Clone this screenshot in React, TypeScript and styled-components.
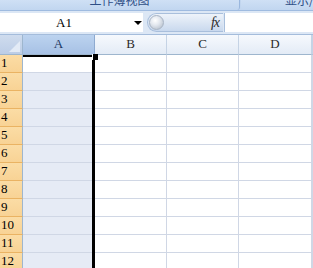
import React from 'react';
import styled, { createGlobalStyle } from 'styled-components';

const Global = createGlobalStyle`
  html, body { margin: 0; padding: 0; background: #fff; }
  body { width: 313px; height: 268px; overflow: hidden; font-family: "Liberation Serif", serif; }
`;

const Page = styled.div`
  width: 313px;
  height: 268px;
  overflow: hidden;
  display: flex;
  flex-direction: column;
  background: #fff;
`;

const Ribbon = styled.div`
  height: 10px;
  flex: none;
  display: flex;
  background: #c2d6ef;
  border-bottom: 1px solid #9fbbe0;
  overflow: hidden;
`;

const Group = styled.div<{ $w?: number; $pad?: number }>`
  width: ${(p) => (p.$w ? `${p.$w}px` : 'auto')};
  flex: ${(p) => (p.$w ? 'none' : '1')};
  display: flex;
  justify-content: ${(p) => (p.$pad ? 'flex-start' : 'center')};
  padding-left: ${(p) => p.$pad ?? 0}px;
  align-items: flex-end;
  background: linear-gradient(#cfe0f5, #c1d6f0);
  border-right: 1px solid #9ab7de;
  border-radius: 0 0 3px 3px;
  margin-right: 1px;
`;

const GroupLabel = styled.span`
  font: 12px/12px "Noto Sans CJK SC", sans-serif;
  color: #2f4f86;
  margin-bottom: 4px;
  white-space: nowrap;
`;

const FormulaBar = styled.div`
  height: 24px;
  flex: none;
  box-sizing: border-box;
  padding-top: 2px;
  display: flex;
  align-items: flex-start;
  background: #dce7f5;
  border-bottom: 1px solid #a4bcdb;
`;

const NameBox = styled.div`
  width: 143px;
  height: 19px;
  flex: none;
  box-sizing: border-box;
  background: #fff;
  display: flex;
  align-items: center;
  position: relative;
  font: 13px "Liberation Serif", serif;
  color: #000;
`;

const NameText = styled.span`
  width: 128px;
  text-align: center;
  padding-top: 1px;
`;

const Arrow = styled.span`
  width: 0;
  height: 0;
  border-left: 4px solid transparent;
  border-right: 4px solid transparent;
  border-top: 4px solid #000;
  margin-left: 6px;
`;

const Pill = styled.div`
  width: 76px;
  height: 19px;
  flex: none;
  margin-left: 4px;
  box-sizing: border-box;
  border: 1px solid #a9bfdc;
  border-right: none;
  border-radius: 10px 0 0 10px;
  background: linear-gradient(#eef3fa, #c9d9ee);
  display: flex;
  align-items: center;
  justify-content: space-between;
`;

const Knob = styled.span`
  width: 15px;
  height: 15px;
  margin-left: 1px;
  border-radius: 50%;
  background: radial-gradient(circle at 40% 35%, #ffffff 0%, #e3e8ef 40%, #aab5c3 100%);
  border: 1px solid #a8b4c4;
  box-sizing: border-box;
`;

const Fx = styled.span`
  font: italic 14px "Liberation Serif", serif;
  color: #2b2b2b;
  margin-right: 4px;
  letter-spacing: -1px;
`;

const FormulaInput = styled.div`
  flex: 1;
  height: 19px;
  margin-left: 1px;
  background: #fff;
  border-left: 1px solid #a9bfdc;
`;

const SheetArea = styled.div`
  position: relative;
  flex: 1;
  overflow: hidden;
`;

const Grid = styled.div`
  display: grid;
  grid-template-columns: 23px 72px 72px 72px 73px 1fr;
  grid-template-rows: 20px repeat(13, 18px);
`;

const Cell = styled.div<{ $col?: boolean; $active?: boolean }>`
  box-sizing: border-box;
  border-right: 1px solid #d0d7e5;
  border-bottom: 1px solid #d0d7e5;
  background: ${(p) => (p.$active ? '#fff' : p.$col ? '#e6ebf5' : '#fff')};
`;

const Corner = styled.div`
  box-sizing: border-box;
  position: relative;
  background: linear-gradient(#cfdcee, #bccde6);
  border-right: 1px solid #9eb6ce;
  border-bottom: 1px solid #9eb6ce;
  &::after {
    content: '';
    position: absolute;
    right: 2px;
    bottom: 2px;
    width: 0;
    height: 0;
    border-left: 11px solid transparent;
    border-bottom: 11px solid #e3ebf6;
  }
`;

const ColHeader = styled.div<{ $sel?: boolean }>`
  box-sizing: border-box;
  display: flex;
  align-items: flex-end;
  justify-content: center;
  padding-bottom: 2px;
  font: 13px "Liberation Serif", serif;
  color: ${(p) => (p.$sel ? '#1d3660' : '#2a2a2a')};
  background: ${(p) =>
    p.$sel ? 'linear-gradient(#bcd3ef, #a7c1e5)' : 'linear-gradient(#f6f9fd, #e3ebf6)'};
  border-right: 1px solid ${(p) => (p.$sel ? '#8eaad0' : '#c5d3e5')};
  border-bottom: 1px solid #9eb6ce;
`;

const RowHeader = styled.div`
  box-sizing: border-box;
  display: flex;
  align-items: flex-end;
  padding: 0 0 1px 1px;
  font: 13px "Liberation Serif", serif;
  color: #000;
  background: linear-gradient(#fbdca5, #f8d395);
  border-right: 1px solid #9eb6ce;
  border-bottom: 1px solid #eab363;
`;

const Selection = styled.div`
  position: absolute;
  left: 23px;
  top: 20px;
  width: 72px;
  bottom: -4px;
  box-sizing: border-box;
  border-top: 2px solid #000;
  border-right: 3px solid #000;
  pointer-events: none;
`;

const FillHandle = styled.div`
  position: absolute;
  left: 92px;
  top: 19px;
  width: 5px;
  height: 6px;
  background: #000;
  border-left: 1px solid #fff;
`;

const columns = ['A', 'B', 'C', 'D', 'E'];
const rows = Array.from({ length: 13 }, (_, i) => i + 1);

export default function App() {
  return (
    <Page>
      <Global />
      <Ribbon>
        <Group $w={239}>
          <GroupLabel>工作簿视图</GroupLabel>
        </Group>
        <Group $pad={44}>
          <GroupLabel>显示/隐藏</GroupLabel>
        </Group>
      </Ribbon>
      <FormulaBar>
        <NameBox>
          <NameText>A1</NameText>
          <Arrow />
        </NameBox>
        <Pill>
          <Knob />
          <Fx>fx</Fx>
        </Pill>
        <FormulaInput />
      </FormulaBar>
      <SheetArea>
        <Grid>
          <Corner />
          {columns.map((c) => (
            <ColHeader key={c} $sel={c === 'A'}>
              {c === 'E' ? '' : c}
            </ColHeader>
          ))}
          {rows.map((r) => (
            <React.Fragment key={r}>
              <RowHeader>{r}</RowHeader>
              {columns.map((c) => (
                <Cell key={c} $col={c === 'A'} $active={c === 'A' && r === 1} />
              ))}
            </React.Fragment>
          ))}
        </Grid>
        <Selection />
        <FillHandle />
      </SheetArea>
    </Page>
  );
}
